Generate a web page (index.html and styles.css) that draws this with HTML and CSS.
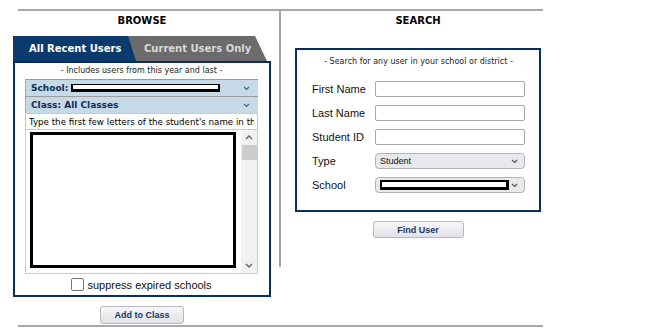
FILE: index.html
```html
<!DOCTYPE html>
<html lang="en">
<head>
  <meta charset="UTF-8" />
  <meta name="viewport" content="width=device-width, initial-scale=1.0"/>
  <title>Find Users</title>
  <link rel="stylesheet" href="styles.css">
</head>
<body>
<div class="page">
  <div class="rule"></div>
  <div class="columns">
    <div class="col browse">
      <h2 class="col-title">BROWSE</h2>
      <div class="tabs">
        <div class="tab tab-active">All Recent Users</div>
        <div class="tab tab-idle">Current Users Only</div>
      </div>
      <div class="panel">
        <p class="note">- Includes users from this year and last -</p>
        <div class="pick">
          <b>School:</b><span class="redact redact-school"></span>
          <svg class="chev" width="7" height="5" viewBox="0 0 7 5"><path d="M1 1l2.5 2.5L6 1" fill="none" stroke="#3d6590" stroke-width="1.2"/></svg>
        </div>
        <div class="pick">
          <b>Class: All Classes</b>
          <svg class="chev" width="7" height="5" viewBox="0 0 7 5"><path d="M1 1l2.5 2.5L6 1" fill="none" stroke="#3d6590" stroke-width="1.2"/></svg>
        </div>
        <input class="name-filter" type="text" value="Type the first few letters of the student's name in the box below">
        <div class="listbox">
          <div class="list-frame"></div>
          <div class="scrollbar">
            <svg class="arrow" width="8" height="5" viewBox="0 0 8 5"><path d="M1 4l3-3 3 3" fill="none" stroke="#606060" stroke-width="1.3"/></svg>
            <div class="thumb"></div>
            <div class="track"></div>
            <svg class="arrow" width="8" height="5" viewBox="0 0 8 5"><path d="M1 1l3 3 3-3" fill="none" stroke="#606060" stroke-width="1.3"/></svg>
          </div>
        </div>
        <label class="suppress"><span class="check"></span>suppress expired schools</label>
      </div>
      <button class="btn">Add to Class</button>
    </div>

    <div class="col search">
      <h2 class="col-title">SEARCH</h2>
      <div class="search-box">
        <p class="note">- Search for any user in your school or district -</p>
        <div class="form">
          <label>First Name</label><input class="field" type="text">
          <label>Last Name</label><input class="field" type="text">
          <label>Student ID</label><input class="field" type="text">
          <label>Type</label>
          <div class="select">
            <span>Student</span>
            <svg width="7" height="5" viewBox="0 0 7 5"><path d="M1 1l2.5 2.5L6 1" fill="none" stroke="#555" stroke-width="1.2"/></svg>
          </div>
          <label>School</label>
          <div class="select">
            <span class="redact redact-search"></span>
            <svg width="7" height="5" viewBox="0 0 7 5"><path d="M1 1l2.5 2.5L6 1" fill="none" stroke="#555" stroke-width="1.2"/></svg>
          </div>
        </div>
      </div>
      <button class="btn btn-find">Find User</button>
    </div>
  </div>
  <div class="rule rule-bottom"></div>
</div>
</body>
</html>
```

FILE: styles.css
```css
body {
  margin: 0;
  padding: 0;
  background: #fff;
  font-family: "DejaVu Sans", Verdana, sans-serif;
}
.page {
  width: 653px;
}
.rule {
  margin: 9px 0 0 18px;
  width: 525px;
  height: 2px;
  background: #a9a9a9;
}
.rule-bottom {
  margin-top: 1px;
}
.columns {
  display: flex;
  align-items: flex-start;
}
.col {
  display: flex;
  flex-direction: column;
  align-items: center;
}
.browse {
  margin-left: 13px;
  width: 258px;
}
.search {
  margin-left: 8px;
  width: 274px;
  border-left: 2px solid #a3a3a3;
  padding-bottom: 29px;
}
.col-title {
  margin: 0;
  padding-top: 4px;
  font-size: 10px;
  line-height: 12px;
  font-weight: bold;
  color: #000;
}

/* tabs */
.tabs {
  display: flex;
  align-self: stretch;
  margin-top: 9px;
  height: 25px;
}
.tab {
  height: 25px;
  line-height: 26px;
  padding-left: 16px;
  font-size: 10px;
  font-weight: bold;
  box-sizing: border-box;
  white-space: nowrap;
}
.tab-active {
  position: relative;
  z-index: 1;
  width: 123px;
  background: #0b3b6c;
  color: #fff;
  clip-path: polygon(0 0, calc(100% - 8px) 0, 100% 100%, 0 100%);
}
.tab-idle {
  width: 139px;
  margin-left: -8px;
  background: #6b6b6b;
  color: #d9d9d9;
  clip-path: polygon(0 0, calc(100% - 12px) 0, 100% 100%, 0 100%);
}

/* browse panel */
.panel {
  align-self: stretch;
  border: 2px solid #0b2d5b;
  padding: 0 11px 0 10px;
}
.note {
  margin: 3px 0;
  font-size: 8px;
  line-height: 10px;
  text-align: center;
  color: #222;
}
.pick {
  display: flex;
  align-items: center;
  height: 17px;
  box-sizing: border-box;
  padding: 0 8px 0 5px;
  background: #c5d9e7;
  border-top: 1px solid #9c9c9c;
  border-left: 1px solid #a8a8a8;
  font-size: 9px;
  color: #0f2d57;
}
.pick b {
  white-space: nowrap;
}
.chev {
  margin-left: auto;
}
.redact {
  display: block;
  box-sizing: border-box;
  background: #fff;
  border: 2px solid #000;
}
.redact-school {
  width: 149px;
  height: 8px;
  margin-left: 3px;
  border-width: 1px 2px 3px 2px;
}
.name-filter {
  display: block;
  width: 100%;
  height: 17px;
  box-sizing: border-box;
  margin: 0;
  padding: 0 3px;
  border: 1px solid #c9c9c9;
  font-family: "DejaVu Sans", Verdana, sans-serif;
  font-size: 8.7px;
  color: #000;
  outline: none;
}
.listbox {
  display: flex;
  height: 144px;
  box-sizing: border-box;
  border: 1px solid #cdcdcd;
  border-top: none;
}
.list-frame {
  width: 206px;
  height: 136px;
  box-sizing: border-box;
  margin: 2px 0 0 4px;
  border: 3px solid #000;
}
.scrollbar {
  margin-left: auto;
  width: 16px;
  background: #f1f1f1;
  display: flex;
  flex-direction: column;
  align-items: center;
}
.arrow {
  margin: 5px 0;
}
.thumb {
  width: 15px;
  height: 15px;
  background: #cdcdcd;
}
.track {
  flex: 1;
}
.suppress {
  display: flex;
  justify-content: center;
  align-items: center;
  height: 21px;
  font-family: "Liberation Sans", Arial, sans-serif;
  font-size: 11px;
  color: #111;
}
.check {
  width: 13px;
  height: 13px;
  box-sizing: border-box;
  margin-right: 3px;
  border: 1px solid #767676;
  border-radius: 2px;
  background: #fff;
}

/* buttons */
.btn {
  margin-top: 9px;
  width: 84px;
  height: 18px;
  padding: 0;
  border: 1px solid #b8b8c0;
  border-radius: 3px;
  background: linear-gradient(#f7f7f9, #e1e1e7);
  font-family: "Liberation Sans", Arial, sans-serif;
  font-size: 9px;
  font-weight: bold;
  color: #1b3561;
  cursor: pointer;
}
.btn-find {
  width: 91px;
  height: 17px;
}

/* search panel */
.search-box {
  margin-top: 21px;
  width: 246px;
  box-sizing: border-box;
  border: 2px solid #0b2d5b;
  padding: 7px 14px 17px 15px;
}
.search-box .note {
  margin: 0;
}
.form {
  display: grid;
  grid-template-columns: 63px 150px;
  grid-auto-rows: 16px;
  row-gap: 8px;
  align-items: center;
  margin-top: 14px;
}
.form label {
  font-family: "Liberation Sans", Arial, sans-serif;
  font-size: 11px;
  color: #111;
}
.field {
  width: 150px;
  height: 16px;
  box-sizing: border-box;
  margin: 0;
  border: 1px solid #a6a6a6;
  border-radius: 2px;
  background: #fff;
}
.select {
  display: flex;
  align-items: center;
  height: 16px;
  box-sizing: border-box;
  padding: 0 6px 0 4px;
  border: 1px solid #b3b3b3;
  border-radius: 4px;
  background: #e9e9ed;
  font-family: "Liberation Sans", Arial, sans-serif;
  font-size: 9px;
  color: #111;
}
.select svg {
  margin-left: auto;
}
.redact-search {
  width: 129px;
  height: 10px;
  border-width: 2px 3px 3px 2px;
}
```
